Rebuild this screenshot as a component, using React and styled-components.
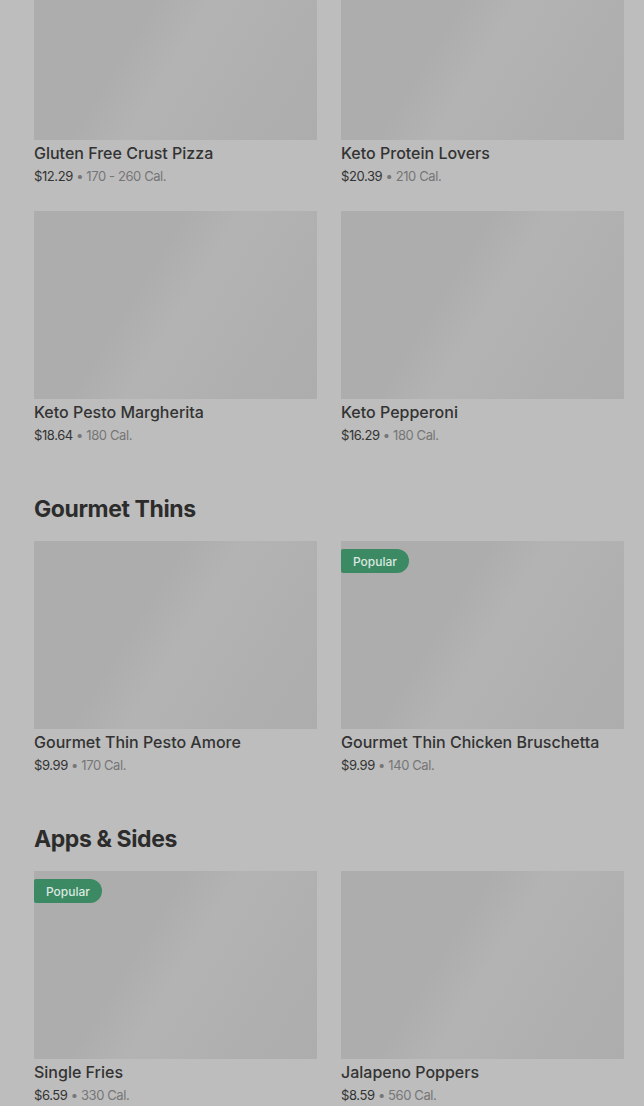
import React from "react";
import styled, { createGlobalStyle } from "styled-components";

const GlobalStyle = createGlobalStyle`
  html, body {
    margin: 0;
    padding: 0;
    background: #bdbdbd;
    overflow: hidden;
  }
  body {
    font-family: Inter, "Noto Sans", "Liberation Sans", sans-serif;
    -webkit-font-smoothing: antialiased;
  }
`;

const Page = styled.main`
  margin-top: -48px;
  padding: 0 20px 0 34px;
`;

const Section = styled.section`
  & + & {
    margin-top: 49px;
  }
`;

const Heading = styled.h2`
  margin: 0 0 15px;
  font-size: 23px;
  line-height: 33px;
  font-weight: 700;
  letter-spacing: -0.4px;
  color: #2c2c2c;
`;

const Grid = styled.div`
  display: grid;
  grid-template-columns: repeat(2, 283px);
  column-gap: 24px;
  row-gap: 26px;
`;

const Card = styled.div`
  display: flex;
  flex-direction: column;
`;

const Thumb = styled.div`
  position: relative;
  height: 188px;
  background: linear-gradient(
    122deg,
    #adadad 0%,
    #adadad 38%,
    #b3b3b3 52%,
    #b2b2b2 62%,
    #afafaf 78%,
    #adadad 100%
  );
`;

const Badge = styled.span`
  position: absolute;
  top: 8px;
  left: 0;
  height: 24px;
  padding: 0 12px;
  display: flex;
  align-items: center;
  background: #3b8a63;
  color: #dbe8e1;
  font-size: 12px;
  font-weight: 500;
  border-radius: 2px 12px 12px 2px;
`;

const Name = styled.div`
  margin-top: 3px;
  font-size: 16px;
  line-height: 20px;
  font-weight: 500;
  color: #333;
`;

const Meta = styled.div`
  margin-top: 4px;
  font-size: 13px;
  line-height: 18px;
  color: #767676;
  letter-spacing: -0.4px;
`;

const Price = styled.span`
  color: #333;
`;

const sections = [
  {
    items: [
      { name: "Gluten Free Crust Pizza", price: "$12.29", cal: "170 - 260 Cal." },
      { name: "Keto Protein Lovers", price: "$20.39", cal: "210 Cal." },
      { name: "Keto Pesto Margherita", price: "$18.64", cal: "180 Cal." },
      { name: "Keto Pepperoni", price: "$16.29", cal: "180 Cal." },
    ],
  },
  {
    title: "Gourmet Thins",
    items: [
      { name: "Gourmet Thin Pesto Amore", price: "$9.99", cal: "170 Cal." },
      { name: "Gourmet Thin Chicken Bruschetta", price: "$9.99", cal: "140 Cal.", popular: true },
    ],
  },
  {
    title: "Apps & Sides",
    items: [
      { name: "Single Fries", price: "$6.59", cal: "330 Cal.", popular: true },
      { name: "Jalapeno Poppers", price: "$8.59", cal: "560 Cal." },
    ],
  },
];

const App = () => (
  <>
    <GlobalStyle />
    <Page>
      {sections.map((section, i) => (
        <Section key={i}>
          {section.title && <Heading>{section.title}</Heading>}
          <Grid>
            {section.items.map((item) => (
              <Card key={item.name}>
                <Thumb>{item.popular && <Badge>Popular</Badge>}</Thumb>
                <Name>{item.name}</Name>
                <Meta>
                  <Price>{item.price}</Price> • {item.cal}
                </Meta>
              </Card>
            ))}
          </Grid>
        </Section>
      ))}
    </Page>
  </>
);

export default App;
